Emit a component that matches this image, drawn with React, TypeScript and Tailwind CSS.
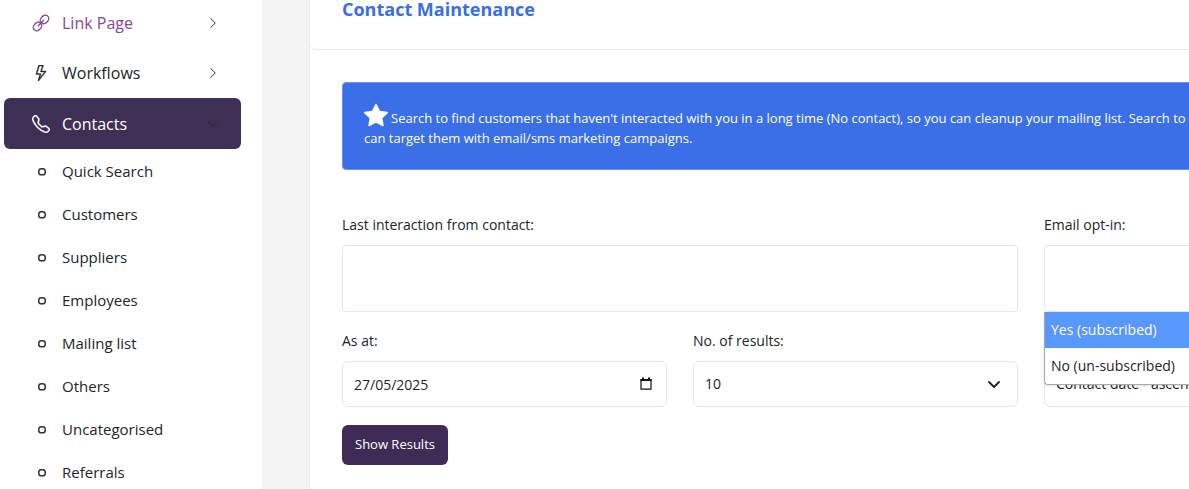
import React, { useState } from 'react';
import { BsChevronDown, BsChevronRight, BsLightning, BsStarFill, BsTelephone } from 'react-icons/bs';

const contactLinks = [
  'Quick Search',
  'Customers',
  'Suppliers',
  'Employees',
  'Mailing list',
  'Others',
  'Uncategorised',
  'Referrals',
];

const optInOptions = ['Yes (subscribed)', 'No (un-subscribed)'];

function LinkIcon() {
  return (
    <svg className="w-[18px] h-[18px]" viewBox="0 0 18 18" fill="none" stroke="currentColor" strokeWidth="1.4" strokeLinecap="round">
      <ellipse cx="12.5" cy="5.5" rx="4.7" ry="3.7" transform="rotate(-45 12.5 5.5)" />
      <ellipse cx="5.5" cy="12.5" rx="4.7" ry="3.7" transform="rotate(-45 5.5 12.5)" />
      <path d="M6.3 11.7L11.7 6.3" />
    </svg>
  );
}

function Sidebar() {
  return (
    <aside className="w-[262px] shrink-0 bg-white">
      <nav className="-mt-0.5 pl-1 pr-[21px]">
        <a href="#link-page" className="flex items-center h-[50px] pl-7 pr-[22px] text-base text-[#84479a]">
          <span className="flex w-[30px]"><LinkIcon /></span>
          <span className="flex-1">Link Page</span>
          <BsChevronRight className="w-3 h-3 text-[#333333]" />
        </a>
        <a href="#workflows" className="flex items-center h-[50px] pl-7 pr-[22px] text-base">
          <span className="flex w-[30px] pl-px"><BsLightning className="w-4 h-4" stroke="currentColor" strokeWidth="0.4" /></span>
          <span className="flex-1">Workflows</span>
          <BsChevronRight className="w-3 h-3 text-[#333333]" />
        </a>
        <a href="#contacts" className="flex items-center h-[51px] pl-7 pr-[22px] rounded-md bg-[#3e3054] text-base text-white">
          <span className="flex w-[30px]"><BsTelephone className="w-[18px] h-[18px]" stroke="currentColor" strokeWidth="0.4" /></span>
          <span className="flex-1">Contacts</span>
          <BsChevronDown className="w-3 h-3 text-[#292a3a]" />
        </a>
        <ul className="pt-px">
          {contactLinks.map((label) => (
            <li key={label}>
              <a href="#contacts" className="flex items-center h-[43px] pl-[34px] text-[15px]">
                <svg className="w-2 h-2 mr-4" viewBox="0 0 8 8" fill="none" stroke="#333333" strokeWidth="1.5">
                  <rect x="0.75" y="0.75" width="6.5" height="6" rx="2.6" />
                </svg>
                {label}
              </a>
            </li>
          ))}
        </ul>
      </nav>
    </aside>
  );
}

export default function App() {
  const [optIn, setOptIn] = useState(optInOptions[0]);
  const field = 'w-full border border-[#e6e6e6] bg-white text-[#212529]';

  return (
    <div className="flex h-screen overflow-hidden bg-[#f3f3f3] font-['Open_Sans','Noto_Sans',sans-serif] text-[15px] text-[#212529]">
      <Sidebar />

      <main className="flex-1 min-w-0 pl-[47px] overflow-hidden">
        <div className="min-w-[1443px] min-h-full bg-white border-l border-[#e9e9e9]">
          <header className="h-[50px] pl-8 rounded-bl-md border-b border-[#ebebeb]">
            <h1 className="text-lg leading-[18px] font-bold text-[#396ee6]">Contact Maintenance</h1>
          </header>

          <div className="px-8 pt-8">
            {/* Info banner */}
            <p className="h-[88px] px-[21px] pt-5 rounded-sm border border-[#6f95ee] bg-[#3b6fe7] text-[13px] leading-5 text-white whitespace-nowrap">
              <BsStarFill className="inline-block w-6 h-6 mr-[3px] align-text-bottom" />
              Search to find customers that haven't interacted with you in a long time (No contact), so you can cleanup your mailing list. Search to identify
              <br />
              can target them with email/sms marketing campaigns.
            </p>

            <form className="grid grid-cols-4 gap-x-[26px] pt-[45px] text-sm leading-5" onSubmit={(e) => e.preventDefault()}>
              <div className="col-span-2 mb-[19px]">
                <label htmlFor="interaction" className="block mb-[10px]">Last interaction from contact:</label>
                <textarea id="interaction" className={`${field} block h-[67px] rounded-sm resize-none`} />
              </div>
              <div className="relative">
                <label htmlFor="opt-in" className="block mb-[10px]">Email opt-in:</label>
                <input id="opt-in" className={`${field} block h-[67px] rounded-sm`} />
                <ul role="listbox" aria-label="Email opt-in" className="absolute left-0 right-0 top-[97px] z-10 border border-[#aaaaaa] border-t-0 rounded-b-sm bg-white shadow-sm">
                  {optInOptions.map((option) => (
                    <li
                      key={option}
                      role="option"
                      aria-selected={option === optIn}
                      onClick={() => setOptIn(option)}
                      className="h-9 px-1.5 py-2 cursor-pointer aria-selected:bg-[#5897fb] aria-selected:text-white"
                    >
                      {option}
                    </li>
                  ))}
                </ul>
              </div>

              <div className="col-start-1">
                <label htmlFor="as-at" className="block mb-[10px]">As at:</label>
                <div className="relative">
                  <input id="as-at" defaultValue="27/05/2025" className={`${field} block h-[46px] px-[11px] rounded-md`} />
                  <svg className="absolute right-[15px] top-4 w-3 h-[13px]" viewBox="0 0 12 13" fill="none" stroke="#111111">
                    <path d="M1 2.5h10v9.7H1z" strokeWidth="1.2" />
                    <path d="M.5 3h11M3 .5v2M9 .5v2" strokeWidth="2" />
                  </svg>
                </div>
              </div>
              <div>
                <label htmlFor="results" className="block mb-[10px]">No. of results:</label>
                <div className="relative">
                  <select id="results" className={`${field} block h-[46px] px-[11px] rounded-md appearance-none`}>
                    <option>10</option>
                  </select>
                  <svg className="absolute right-[18px] top-5 w-3 h-2" viewBox="0 0 12 8" fill="none" stroke="#222222" strokeWidth="1.8" strokeLinecap="round" strokeLinejoin="round">
                    <path d="M1 1l5 5 5-5" />
                  </svg>
                </div>
              </div>
              <div>
                <label htmlFor="sort" className="block mb-[10px]">Sort by:</label>
                <select id="sort" className={`${field} block h-[46px] px-[11px] rounded-md appearance-none`}>
                  <option>Contact date - ascending</option>
                </select>
              </div>

              <div className="col-span-4 pt-[18px]">
                <button type="submit" className="block h-10 px-[13px] pb-0.5 rounded-md bg-[#3f2c56] text-[13px] text-white">Show Results</button>
              </div>
            </form>
          </div>
        </div>
      </main>
    </div>
  );
}
